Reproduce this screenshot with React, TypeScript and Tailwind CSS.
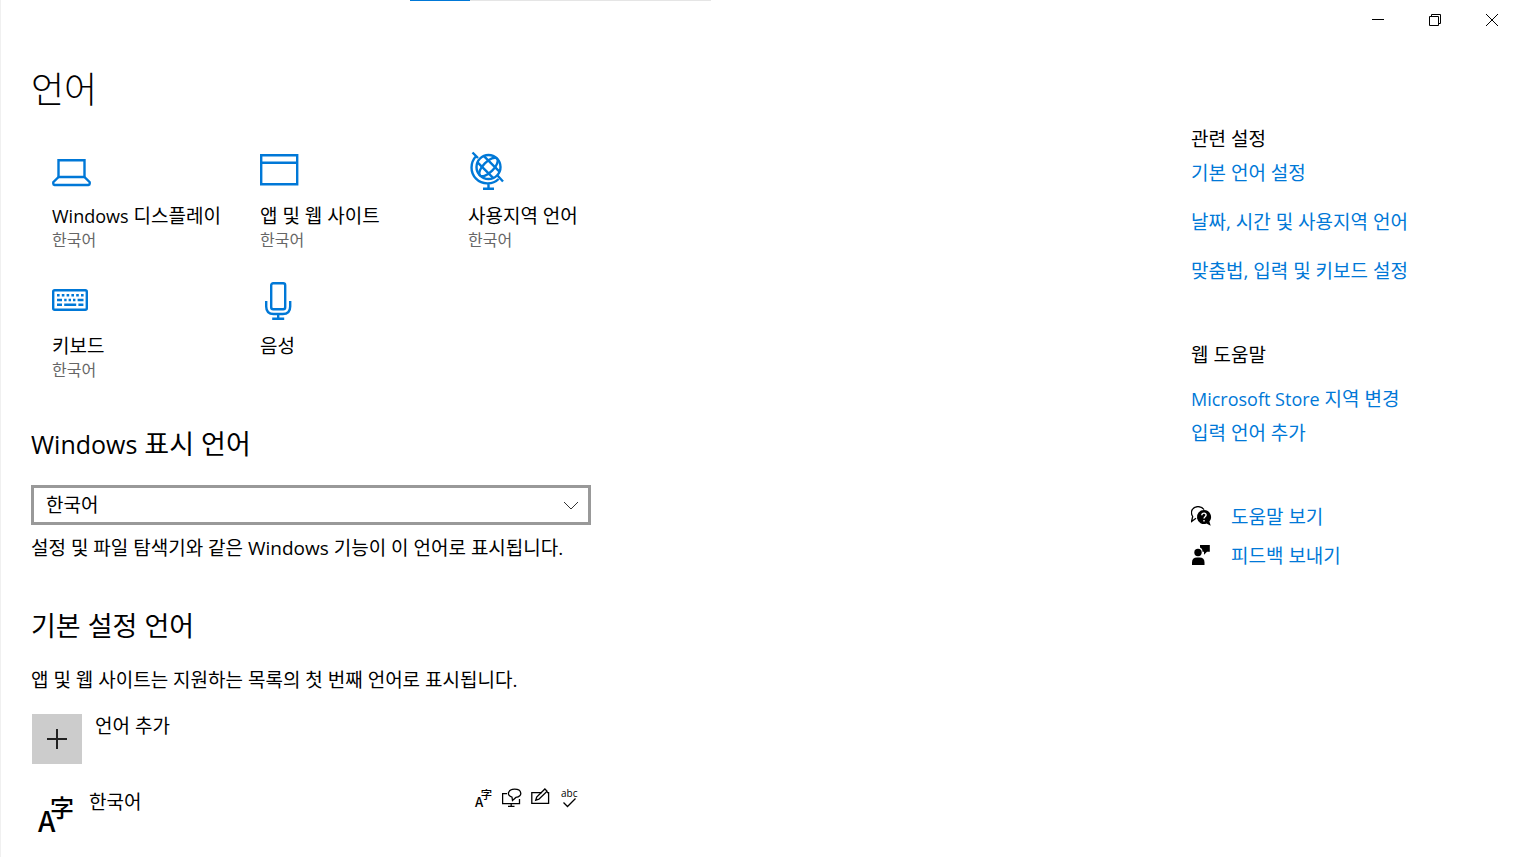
import type { ReactNode } from "react";

interface Tile {
  label: ReactNode;
  value?: string;
  icon: ReactNode;
}

const LaptopIcon = () => (
  <svg width="40" height="40" viewBox="0 0 40 40" fill="none" stroke="#0078d7" strokeWidth="2.4" aria-hidden="true">
    <path d="M6.5 27V10.2h26V27z" />
    <path d="M6.500 27 1.300 32.200v1.600q0 1.200 1.200 1.200h34q1.200 0 1.200-1.200v-1.600L32.500 27" />
  </svg>
);

const WindowIcon = () => (
  <svg width="40" height="40" viewBox="0 0 40 40" fill="none" stroke="#0078d7" strokeWidth="2.4" aria-hidden="true">
    <path d="M1.2 5.2h36v29h-36zM1.2 12.8h36" />
  </svg>
);

const GlobeIcon = () => (
  <svg width="40" height="40" viewBox="0 0 40 40" fill="none" stroke="#0078d7" strokeWidth="2.4" aria-hidden="true">
    <circle cx="20.5" cy="17" r="12" />
    <g transform="rotate(45 20.5 17)">
      <ellipse cx="20.5" cy="17" rx="5.2" ry="12" />
      <path d="M9.500 12.500h22M9.500 21.500h22" />
    </g>
    <path d="M4.500 2.500 10 8M8.200 6C2 12.500 2 22.500 8 28.600s16.500 6.600 22.600.4M29.500 25.500 35 31.500M20.500 33v5.500M15 38.800h11" />
  </svg>
);

const KeyboardIcon = () => (
  <svg width="40" height="40" viewBox="0 0 40 40" fill="none" stroke="#0078d7" strokeWidth="2.4" aria-hidden="true">
    <rect x="1.200" y="10.200" width="33.600" height="19.600" rx="1.500" />
    <path d="M5 15.200h2.600m2.200 0h2.600m2.200 0h2.600m2.200 0H22m2.200 0h2.600m2.200 0h2.600M5 20h5m2.200 0h2.400m2 0h2.400m2 0h2.400m2.200 0H31.500M5 24.800h5m2.200 0h12m2.200 0h5" />
  </svg>
);

const MicIcon = () => (
  <svg width="40" height="40" viewBox="0 0 40 40" fill="none" stroke="#0078d7" strokeWidth="2.4" aria-hidden="true">
    <rect x="11.200" y="3.200" width="14" height="26" rx="2" />
    <path d="M6.200 21v5.500q0 7.500 7.500 7.500h9q7.500 0 7.500-7.500V21M18.200 34v4.500M12.200 38.800h12" />
  </svg>
);

const LanguageIcon = ({ size }: { size: number }) => (
  <svg width={size} height={size} viewBox="0 0 36 36" className="overflow-visible" aria-hidden="true">
    <text x="0" y="35" fontSize="28" fontWeight="500" fontFamily="'Noto Sans CJK KR', sans-serif">A</text>
    <text x="12" y="20" fontSize="24" fontWeight="500" fontFamily="'Noto Sans CJK KR', sans-serif">字</text>
  </svg>
);

const DisplaySpeechIcon = () => (
  <svg width="20" height="20" viewBox="0 0 20 20" fill="none" stroke="#000" strokeWidth="1.3" aria-hidden="true">
    <path d="M5 5.600H.600v10H17.500V11M9.200 15.600v2.600M6 18.400h6.500" />
    <path d="M10 9.200C4 7.500 6 1.200 12.600 1.200c7.500 0 8.500 7.500 1.300 8.200L10.500 12.400z" />
  </svg>
);

const HandwritingIcon = () => (
  <svg width="20" height="20" viewBox="0 0 20 20" fill="none" stroke="#000" strokeWidth="1.3" aria-hidden="true">
    <path d="M11 4.600H.800v10.800H17.600V4.600H16" />
    <path d="m4.700 12.200 1-3.200 8.200-8 2.200 2.200-8.200 8z" />
  </svg>
);

const SpellCheckIcon = () => (
  <svg width="20" height="20" viewBox="0 0 20 20" className="overflow-visible" aria-hidden="true">
    <text x="1" y="9" fontSize="10" fontWeight="400" fontFamily="'Open Sans', sans-serif">abc</text>
    <path d="m3.500 14.500 4 4 8-8" fill="none" stroke="#000" strokeWidth="1.300" />
  </svg>
);

const HelpIcon = () => (
  <svg width="22" height="22" viewBox="1 1 22 22" aria-hidden="true">
    <path d="M6 13.200 1.500 16.500l1.200-5C-.5 6.500 3 1.600 8 1.600c2.800 0 4.800 1.200 6 3" fill="none" stroke="#000" strokeWidth="1.300" />
    <path d="M14 5a7 7 0 1 0 2.500 13.500l4.200 2.300-1.300-4.300A7 7 0 0 0 14 5z" />
    <path d="M11.800 10.200c.2-2.800 4.600-2.600 4.300 0-.2 1.500-2.100 1.600-2.100 3.300M14 15v1.500" fill="none" stroke="#fff" strokeWidth="1.400" />
  </svg>
);

const FeedbackIcon = () => (
  <svg width="22" height="22" viewBox="1 1 22 22" aria-hidden="true">
    <circle cx="8" cy="8.500" r="3.700" />
    <path d="M2 21v-2.500Q2 13.500 7 13.500h2.500q5 0 5 5V21zM10 1h9.800v6.800H17l-3 3V7.800h-1.500C12.500 5.500 11.800 4.200 10 3.500z" />
  </svg>
);

const Latin = ({ children }: { children: ReactNode }) => <span className="text-lg leading-none">{children}</span>;

const tiles: Tile[] = [
  { label: <><Latin>Windows</Latin> 디스플레이</>, value: "한국어", icon: <LaptopIcon /> },
  { label: "앱 및 웹 사이트", value: "한국어", icon: <WindowIcon /> },
  { label: "사용지역 언어", value: "한국어", icon: <GlobeIcon /> },
  { label: "키보드", value: "한국어", icon: <KeyboardIcon /> },
  { label: "음성", icon: <MicIcon /> },
];

const relatedLinks = ["기본 언어 설정", "날짜, 시간 및 사용지역 언어", "맞춤법, 입력 및 키보드 설정"];

const TitleBar = () => (
  <header className="flex h-10 justify-end pr-px">
    <button type="button" aria-label="최소화" className="flex w-[57px] items-center justify-center">
      <svg width="12" height="12" viewBox="0 0 12 12" stroke="#000">
        <path d="M0 5.500h12" />
      </svg>
    </button>
    <button type="button" aria-label="이전 크기로 복원" className="flex w-[57px] items-center justify-center">
      <svg width="12" height="12" viewBox="0 0 12 12" fill="none" stroke="#000">
        <path d="M.5 2.500h9v9h-9zM2.500 2.500v-2h9v9h-2" />
      </svg>
    </button>
    <button type="button" aria-label="닫기" className="flex w-[57px] items-center justify-center">
      <svg width="12" height="12" viewBox="0 0 12 12" stroke="#000">
        <path d="m0 0 12 12M12 0 0 12" />
      </svg>
    </button>
  </header>
);

const App = () => {
  return (
    <div className="relative min-h-screen overflow-hidden border-l border-[#f0f0f0] bg-white font-['Open_Sans','Noto_Sans_CJK_KR',sans-serif] text-[19px] leading-7 font-[370] text-black">
      {/* Edge of the window behind */}
      <div className="absolute top-0 left-[409px] flex h-px w-[301px] bg-[#e5e5e5]">
        <div className="w-[60px] bg-[#0078d7]" />
      </div>

      <TitleBar />

      <div className="flex justify-between">
        <main className="w-[620px] pt-[26px] pl-[30px]">
          <h1 className="text-4xl leading-[48px] font-light">언어</h1>

          {/* Language summary */}
          <div className="mt-9 grid grid-cols-[208px_208px_1fr] gap-y-[30px] pl-[21px]">
            {tiles.map((tile, index) => (
              <button key={index} type="button" className="flex h-[100px] flex-col items-start text-left">
                {tile.icon}
                <span className="mt-3 whitespace-nowrap">{tile.label}</span>
                {tile.value && <span className="text-base leading-5 text-[#666]">{tile.value}</span>}
              </button>
            ))}
          </div>

          {/* Display language */}
          <section className="mt-[46px]">
            <h2 className="text-[27px] leading-9">
              <label htmlFor="display-language">
                <span className="text-[25px] leading-none">Windows</span> 표시 언어
              </label>
            </h2>
            <div className="relative mt-[23px] w-[560px]">
              <select
                id="display-language"
                className="block h-10 w-full appearance-none border-3 border-[#999] bg-white pl-3"
              >
                <option>한국어</option>
              </select>
              <svg className="pointer-events-none absolute top-4 right-3" width="16" height="10" viewBox="0 0 16 10" fill="none" stroke="#333">
                <path d="m1 1 7 7 7-7" />
              </svg>
            </div>
            <p className="mt-[9px] whitespace-nowrap">설정 및 파일 탐색기와 같은 Windows 기능이 이 언어로 표시됩니다.</p>
          </section>

          {/* Preferred languages */}
          <section className="mt-[46px]">
            <h2 className="text-[27px] leading-9">기본 설정 언어</h2>
            <p className="mt-[22px] whitespace-nowrap">앱 및 웹 사이트는 지원하는 목록의 첫 번째 언어로 표시됩니다.</p>
            <button type="button" className="mt-5 ml-px flex items-start gap-[13px]">
              <span className="flex size-[50px] items-center justify-center bg-[#ccc]">
                <svg width="20" height="20" viewBox="0 0 20 20" stroke="#222" strokeWidth="2">
                  <path d="M10 0v20M0 10h20" />
                </svg>
              </span>
              <span className="leading-6">언어 추가</span>
            </button>
            <div className="mt-6 flex w-[560px] items-start pr-[11px] pl-[7px]">
              <div className="pt-[9px]">
                <LanguageIcon size={36} />
              </div>
              <span className="ml-[15px]">한국어</span>
              <div className="ml-auto flex gap-[9px]">
                <div className="flex size-5 items-center justify-center">
                  <LanguageIcon size={17} />
                </div>
                <DisplaySpeechIcon />
                <HandwritingIcon />
                <SpellCheckIcon />
              </div>
            </div>
          </section>
        </main>

        <aside className="w-[330px] pt-[85px]">
          <h3>관련 설정</h3>
          <ul className="mt-[6px] flex flex-col gap-[21px] text-[#0078d7]">
            {relatedLinks.map((link) => (
              <li key={link}>
                <a href="#">{link}</a>
              </li>
            ))}
          </ul>

          <h3 className="mt-14">웹 도움말</h3>
          <ul className="mt-4 flex flex-col gap-[6px] text-[#0078d7]">
            <li>
              <a href="#">
                <Latin>Microsoft Store</Latin> 지역 변경
              </a>
            </li>
            <li>
              <a href="#">입력 언어 추가</a>
            </li>
          </ul>

          <div className="mt-14 flex flex-col gap-[11px] text-[#0078d7]">
            <a href="#" className="flex items-center gap-[18px]">
              <HelpIcon />
              도움말 보기
            </a>
            <a href="#" className="flex items-center gap-[18px]">
              <FeedbackIcon />
              피드백 보내기
            </a>
          </div>
        </aside>
      </div>
    </div>
  );
};

export default App;
